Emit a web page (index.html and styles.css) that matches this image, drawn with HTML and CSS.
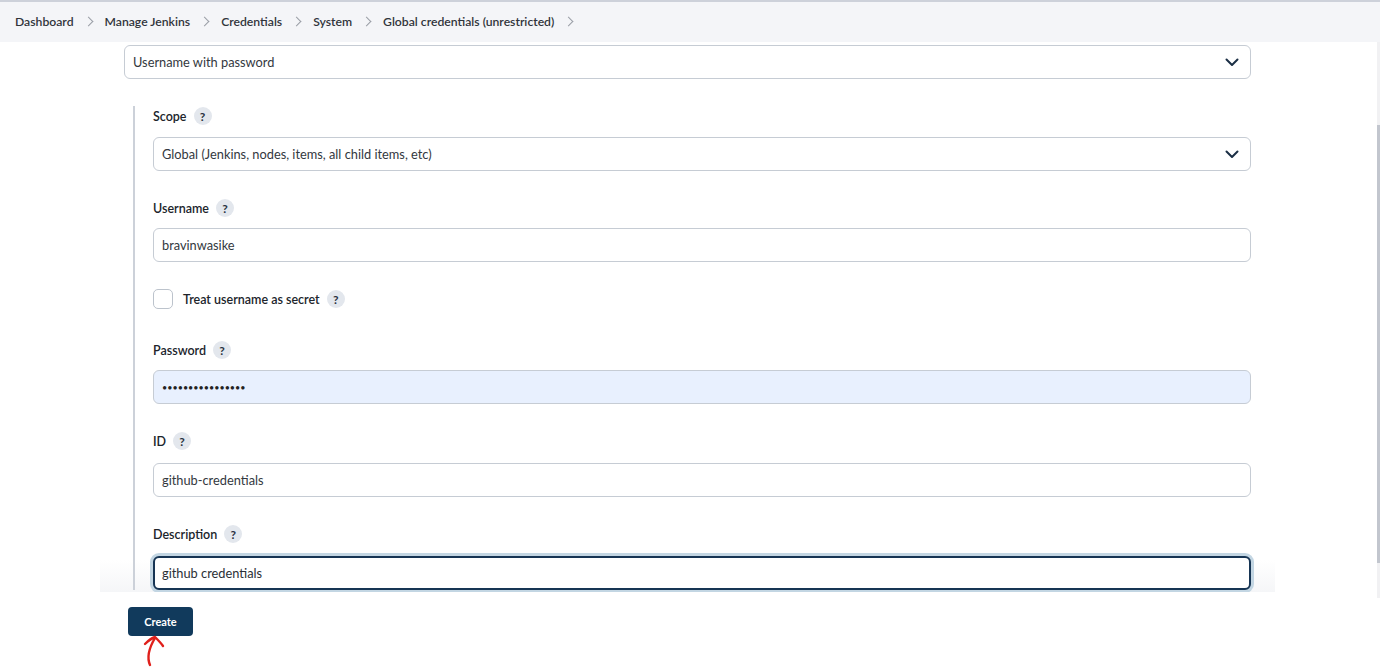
FILE: index.html
```html
<!DOCTYPE html>
<html lang="en">
<head>
<meta charset="utf-8">
<title>New credentials</title>
<link rel="stylesheet" href="styles.css">
</head>
<body>
<header class="crumbs">
  <span class="crumb">Dashboard</span><span class="sep"></span>
  <span class="crumb">Manage Jenkins</span><span class="sep"></span>
  <span class="crumb">Credentials</span><span class="sep"></span>
  <span class="crumb">System</span><span class="sep"></span>
  <span class="crumb">Global credentials (unrestricted)</span><span class="sep"></span>
</header>
<main class="content">
  <div class="fade"></div>
  <div class="select kind">
    <span>Username with password</span>
    <svg class="caret" width="14" height="9" viewBox="0 0 14 9"><path d="M1.5 1.5 L7 7 L12.5 1.5" fill="none" stroke="#1b2f45" stroke-width="2" stroke-linecap="round" stroke-linejoin="round"/></svg>
  </div>
  <div class="group">
    <div class="field">
      <div class="label">Scope <span class="help">?</span></div>
      <div class="select">
        <span>Global (Jenkins, nodes, items, all child items, etc)</span>
        <svg class="caret" width="14" height="9" viewBox="0 0 14 9"><path d="M1.5 1.5 L7 7 L12.5 1.5" fill="none" stroke="#1b2f45" stroke-width="2" stroke-linecap="round" stroke-linejoin="round"/></svg>
      </div>
    </div>
    <div class="field">
      <div class="label lbl-tight">Username <span class="help">?</span></div>
      <div class="input">bravinwasike</div>
    </div>
    <div class="field check-field">
      <span class="checkbox"></span>
      <span class="check-label">Treat username as secret</span>
      <span class="help">?</span>
    </div>
    <div class="field">
      <div class="label lbl-tight">Password <span class="help">?</span></div>
      <div class="input autofill"><span class="dots">••••••••••••••••</span></div>
    </div>
    <div class="field">
      <div class="label lbl-gap">ID <span class="help">?</span></div>
      <div class="input">github-credentials</div>
    </div>
    <div class="field">
      <div class="label lbl-gap">Description <span class="help">?</span></div>
      <div class="input focused">github credentials</div>
    </div>
  </div>
</main>
<footer class="bottom">
  <button class="create">Create</button>
  <svg class="arrow" width="30" height="34" viewBox="0 0 30 34"><path d="M10 32 C7 25 9 15 15 5 M5 11 C8 8 12 5 15 4 C18 7 21 10 23 13" fill="none" stroke="#e0201b" stroke-width="2.4" stroke-linecap="round" stroke-linejoin="round"/></svg>
</footer>
<div class="scrolltrack"><div class="thumb"></div></div>
</body>
</html>
```
FILE: styles.css
```css
* { box-sizing: border-box; }
html, body { margin: 0; padding: 0; }
body {
  width: 1380px;
  height: 667px;
  overflow: hidden;
  background: #fff;
  font-family: Lato, "Open Sans", "Liberation Sans", sans-serif;
  font-size: 12.8px;
  color: #2b2f36;
  position: relative;
}
.crumbs {
  height: 42px;
  background: #f4f5f8;
  border-top: 2px solid #cdd1da;
  display: flex;
  align-items: center;
  padding-left: 15px;
  padding-bottom: 2px;
  font-size: 12.2px;
  font-weight: 600;
  color: #30343b;
}
.sep {
  width: 7px;
  height: 7px;
  border-right: 1.5px solid #9a9ea6;
  border-top: 1.5px solid #9a9ea6;
  transform: rotate(45deg);
  margin: 0 13px 0 11px;
}
.content {
  position: relative;
  height: 550px;
  overflow: hidden;
  padding: 3px 129px 0 124px;
}
.select, .input {
  position: relative;
  height: 34px;
  border: 1px solid #c6ccd4;
  border-radius: 6px;
  display: flex;
  align-items: center;
  padding: 0 8px;
  background: #fff;
  color: #333840;
}
.select { justify-content: space-between; padding-right: 11px; }
.kind { margin-bottom: 27px; }
.group {
  position: relative;
  margin-left: 9px;
  border-left: 2px solid #ccd1d9;
  padding-left: 18px;
}
.field { margin-bottom: 27px; }
.label {
  height: 20px;
  display: flex;
  align-items: center;
  gap: 7px;
  font-size: 12.5px;
  font-weight: 600;
  color: #20242b;
  margin-bottom: 11px;
}
.lbl-tight { margin-bottom: 10px; }
.lbl-gap { margin-bottom: 12px; }
.help {
  width: 18px;
  height: 18px;
  border-radius: 50%;
  background: #e3e7ed;
  color: #2a3140;
  font-size: 12px;
  font-weight: 700;
  display: inline-flex;
  align-items: center;
  justify-content: center;
}
.check-field {
  height: 20px;
  display: flex;
  align-items: center;
  margin-top: 1px;
  margin-bottom: 31px;
}
.checkbox {
  width: 20px;
  height: 20px;
  border: 1.5px solid #bcc3cc;
  border-radius: 5px;
  margin-right: 10px;
}
.check-label { font-size: 12.5px; font-weight: 600; color: #20242b; margin-right: 7px; }
.autofill { background: #e8f0fe; }
.dots { font-size: 9px; letter-spacing: 0; color: #222; }
.focused {
  border: 2px solid #173554;
  box-shadow: 0 0 0 3px #c3d6e3;
  padding-left: 7px;
  color: #2b2f36;
}
.fade {
  position: absolute;
  left: 100px;
  right: 105px;
  bottom: 0;
  height: 32px;
  background: linear-gradient(to bottom, rgba(244,245,247,0), rgba(244,245,247,0.9));
  pointer-events: none;
}
.bottom {
  position: relative;
  padding: 15px 0 0 128px;
  height: 75px;
}
.create {
  width: 65px;
  height: 29px;
  border: none;
  border-radius: 4px;
  background: #113a5c;
  color: #fff;
  font-family: Lato, "Open Sans", "Liberation Sans", sans-serif;
  font-size: 11px;
  font-weight: 700;
  display: block;
}
.arrow {
  position: absolute;
  left: 140px;
  top: 41px;
}
.scrolltrack {
  position: absolute;
  right: 0;
  top: 42px;
  width: 3px;
  height: 556px;
  background: #f1f1f3;
}
.thumb {
  margin-top: 83px;
  height: 438px;
  background: #c2c6ce;
}
```
